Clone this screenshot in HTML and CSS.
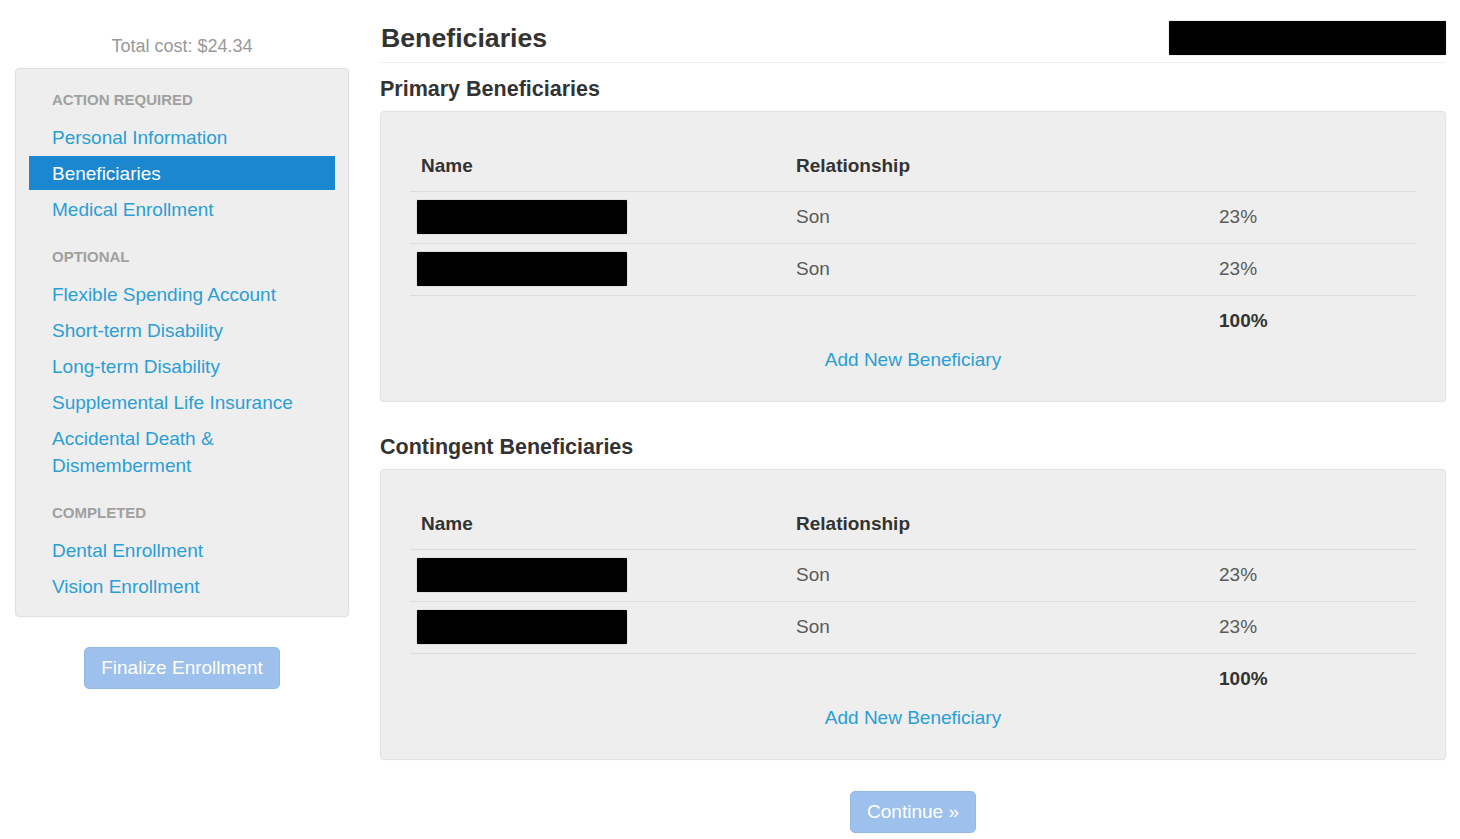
FILE: index.html
```html
<!DOCTYPE html>
<html lang="en">
<head>
<meta charset="utf-8">
<title>Beneficiaries</title>
<link rel="stylesheet" href="styles.css">
</head>
<body>
<div class="page">
  <aside class="sidebar">
    <div class="total-cost">Total cost: $24.34</div>
    <div class="well">
      <ul class="nav">
        <li class="nav-header">Action Required</li>
        <li><a href="#">Personal Information</a></li>
        <li class="active"><a href="#">Beneficiaries</a></li>
        <li><a href="#">Medical Enrollment</a></li>
        <li class="nav-header">Optional</li>
        <li><a href="#">Flexible Spending Account</a></li>
        <li><a href="#">Short-term Disability</a></li>
        <li><a href="#">Long-term Disability</a></li>
        <li><a href="#">Supplemental Life Insurance</a></li>
        <li><a href="#">Accidental Death &amp;<br>Dismemberment</a></li>
        <li class="nav-header">Completed</li>
        <li><a href="#">Dental Enrollment</a></li>
        <li><a href="#">Vision Enrollment</a></li>
      </ul>
    </div>
    <div class="btn-row">
      <button class="btn" type="button">Finalize Enrollment</button>
    </div>
  </aside>

  <main class="main">
    <div class="page-header">
      <h1>Beneficiaries</h1>
      <div class="redact redact-wide"></div>
    </div>

    <h3>Primary Beneficiaries</h3>
    <div class="panel">
      <table class="table">
        <colgroup><col class="c-name"><col class="c-rel"><col></colgroup>
        <thead>
          <tr><th>Name</th><th>Relationship</th><th></th></tr>
        </thead>
        <tbody>
          <tr><td class="name"><span class="redact"></span></td><td>Son</td><td>23%</td></tr>
          <tr><td class="name"><span class="redact"></span></td><td>Son</td><td>23%</td></tr>
          <tr class="sum-row"><td></td><td></td><td>100%</td></tr>
        </tbody>
      </table>
      <div class="add"><a href="#">Add New Beneficiary</a></div>
    </div>

    <h3>Contingent Beneficiaries</h3>
    <div class="panel">
      <table class="table">
        <colgroup><col class="c-name"><col class="c-rel"><col></colgroup>
        <thead>
          <tr><th>Name</th><th>Relationship</th><th></th></tr>
        </thead>
        <tbody>
          <tr><td class="name"><span class="redact"></span></td><td>Son</td><td>23%</td></tr>
          <tr><td class="name"><span class="redact"></span></td><td>Son</td><td>23%</td></tr>
          <tr class="sum-row"><td></td><td></td><td>100%</td></tr>
        </tbody>
      </table>
      <div class="add"><a href="#">Add New Beneficiary</a></div>
    </div>

    <div class="actions">
      <button class="btn" type="button">Continue &raquo;</button>
    </div>
  </main>
</div>
</body>
</html>
```

FILE: styles.css
```css
* { box-sizing: border-box; }

html, body {
  margin: 0;
  padding: 0;
  background: #fff;
}

body {
  font-family: "Liberation Sans", Arial, sans-serif;
  font-size: 19px;
  color: #333;
}

a {
  color: #2a9fd6;
  text-decoration: none;
}

.page {
  display: flex;
  gap: 31px;
  padding-left: 15px;
}

/* Sidebar */
.sidebar {
  width: 334px;
  flex: none;
  padding-top: 33px;
}

.total-cost {
  text-align: center;
  font-size: 18px;
  line-height: 26px;
  color: #999;
  margin-bottom: 9px;
}

.well {
  background: #eeeeee;
  border: 1px solid #e0e0e0;
  border-radius: 4px;
  box-shadow: 0 0 2px rgba(0,0,0,0.06);
  padding: 18px 13px 13px;
}

.nav {
  list-style: none;
  margin: 0;
  padding: 0;
}

.nav li + li { margin-top: 2px; }

.nav .nav-header {
  padding: 0 23px;
  line-height: 26px;
  font-size: 15px;
  font-weight: bold;
  text-transform: uppercase;
  color: #a0a0a0;
  margin-bottom: 7px;
}

.nav li + li.nav-header { margin-top: 18px; }

.nav a {
  display: block;
  padding: 4px 23px 3px;
  line-height: 27px;
  font-size: 19px;
  color: #2a9fd6;
}

.nav .active a {
  background: #1b87d0;
  color: #fff;
}

.btn-row {
  display: flex;
  justify-content: center;
  margin-top: 30px;
}

.btn {
  font-family: "Liberation Sans", Arial, sans-serif;
  font-size: 19px;
  height: 42px;
  padding: 0 16px;
  line-height: 40px;
  color: #fff;
  background: #9dc0ec;
  border: 1px solid #94b9e8;
  border-radius: 5px;
  cursor: default;
}

/* Main */
.main {
  width: 1066px;
  flex: none;
  padding-top: 21px;
}

.page-header {
  display: flex;
  justify-content: space-between;
  align-items: center;
  padding-bottom: 7px;
  border-bottom: 1px solid #eee;
  margin-bottom: 12px;
}

.page-header h1 {
  margin: 0 0 0 1px;
  font-size: 26.7px;
  line-height: 34px;
  font-weight: bold;
  color: #333;
}

.redact {
  display: block;
  background: #000;
  height: 34px;
  width: 210px;
  border-radius: 1px;
  box-shadow: 0 0 1px rgba(0,0,0,0.6);
}

.redact-wide { width: 277px; }

h3 {
  margin: 0 0 8px;
  font-size: 21.5px;
  line-height: 28px;
  font-weight: bold;
  color: #333;
}

.panel {
  background: #eeeeee;
  border: 1px solid #e2e2e2;
  border-radius: 4px;
  box-shadow: 0 0 2px rgba(0,0,0,0.06);
  padding: 28px 29px 28px;
  margin-bottom: 31px;
}

.table {
  width: 100%;
  border-collapse: collapse;
  table-layout: fixed;
}

.c-name { width: 375px; }
.c-rel { width: 423px; }

.table th {
  text-align: left;
  font-weight: bold;
  color: #333;
  padding: 9px 11px 8px;
  line-height: 34px;
}

.table td {
  border-top: 1px solid #dcdcdc;
  padding: 8px 11px 9px;
  line-height: 34px;
  color: #5a5a5a;
  text-align: left;
}

.table td.name { padding-left: 7px; }

.table .sum-row td {
  font-weight: bold;
  color: #333;
}

.add {
  text-align: center;
  line-height: 26px;
}

.actions {
  display: flex;
  justify-content: center;
  margin-top: 1px;
}
```
